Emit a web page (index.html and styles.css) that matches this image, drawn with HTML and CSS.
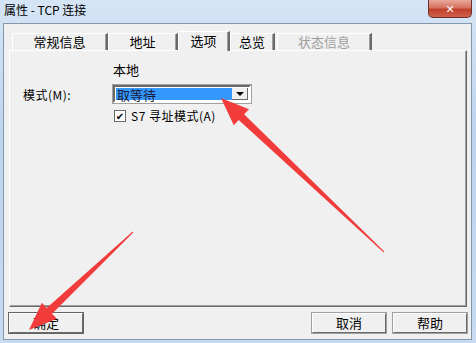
FILE: index.html
```html
<!DOCTYPE html>
<html lang="zh-CN">
<head>
    <meta charset="UTF-8">
    <link rel="stylesheet" href="styles.css">
    <title>属性 - TCP 连接</title>
</head>
<body>
    <div class="window">
        <div class="titlebar">
            <span class="title">属性 - TCP 连接</span>
            <span class="close">✕</span>
        </div>
        <div class="client">
            <!-- 选项卡 -->
            <div class="tabs">
                <div class="tab tab--w1">常规信息</div>
                <div class="tab tab--w2">地址</div>
                <div class="tab tab--active">选项</div>
                <div class="tab tab--w3">总览</div>
                <div class="tab tab--w4 tab--disabled">状态信息</div>
            </div>
            <div class="panel">
                <div class="form">
                    <span></span>
                    <span class="local">本地</span>
                    <label class="label">模式(M):</label>
                    <div class="combo">
                        <span class="combo__value">取等待</span>
                        <span class="combo__btn"><i class="caret"></i></span>
                    </div>
                    <span></span>
                    <label class="check">
                        <span class="check__box">✔</span>
                        <span>S7 寻址模式(A)</span>
                    </label>
                </div>
            </div>
            <div class="buttons">
                <button class="btn btn--default">确定</button>
                <span class="spacer"></span>
                <button class="btn">取消</button>
                <button class="btn">帮助</button>
            </div>
        </div>
    </div>

    <svg class="arrows" width="476" height="343" viewBox="0 0 476 343">
        <polygon points="384.3,251.6 244.1,114.3 249,109.2 221,98 233.8,125.2 238.7,120.1 383.7,252.4"/>
        <polygon points="133.3,232.4 52.1,313.7 56.9,318.8 29,330 41.9,302.8 46.7,307.9 132.7,231.6"/>
    </svg>
</body>
</html>
```

FILE: styles.css
```css
/* 基本设置 */
body {
    margin: 0;
    width: 476px;
    height: 343px;
    overflow: hidden;
    font-family: "Noto Sans CJK SC", "DejaVu Sans", sans-serif;
    font-size: 12px;
    color: #000;
    position: relative;
}

.window {
    width: 476px;
    height: 343px;
    display: flex;
    flex-direction: column;
    background: linear-gradient(180deg, #d5e5f6 0%, #bcd4ee 40%, #c6dbf1 100%);
    box-sizing: border-box;
}

/* 标题栏 */
.titlebar {
    height: 23px;
    display: flex;
    align-items: flex-start;
    justify-content: space-between;
    flex-shrink: 0;
}

.title {
    padding: 2px 0 0 4px;
    font-size: 12px;
    line-height: 16px;
}

.close {
    width: 44px;
    height: 18px;
    margin-right: 4px;
    border: 1px solid #6b2f2a;
    border-top: none;
    border-radius: 0 0 5px 5px;
    background: linear-gradient(180deg, #e9a99b 0%, #d6735f 45%, #c1412c 55%, #d0604a 100%);
    color: #fff;
    font-size: 11px;
    font-weight: bold;
    text-align: center;
    line-height: 17px;
    box-sizing: border-box;
}

/* 客户区 */
.client {
    flex: 1;
    margin: 0 4px 3px 3px;
    border: 1px solid #8396ab;
    background: #f0f0f0;
    display: flex;
    flex-direction: column;
    padding: 7px 4px 6px 5px;
}

.tabs {
    display: flex;
    align-items: flex-end;
    height: 20px;
    padding-left: 3px;
    margin-bottom: -1px;
    position: relative;
    z-index: 1;
}

.tab {
    height: 17px;
    box-sizing: border-box;
    border-top: 1px solid #fff;
    border-left: 1px solid #fff;
    border-right: 2px solid #696969;
    box-shadow: inset -1px 0 0 #a0a0a0;
    text-align: center;
    font-size: 13px;
    line-height: 16px;
    margin-bottom: 1px;
}

.tab--w1 { width: 96px; }
.tab--w2 { width: 70px; }
.tab--w3 { width: 45px; }
.tab--w4 { width: 95px; }

.tab--active {
    width: 52px;
    height: 20px;
    margin-bottom: 0;
    background: #f0f0f0;
    line-height: 17px;
}

.tab--disabled {
    color: #a0a0a0;
    margin-left: 2px;
}

/* 面板 */
.panel {
    height: 257px;
    box-sizing: border-box;
    border-top: 1px solid #fff;
    border-left: 1px solid #fff;
    border-right: 1px solid #696969;
    border-bottom: 1px solid #696969;
    box-shadow: inset -1px -1px 0 #a0a0a0;
    padding: 11px 0 0 13px;
}

.form {
    display: grid;
    grid-template-columns: 90px auto;
    row-gap: 8px;
    align-items: center;
}

.local {
    font-size: 13px;
    line-height: 15px;
}

.label {
    font-size: 12px;
    letter-spacing: 0.5px;
}

.combo {
    width: 138px;
    height: 18px;
    box-sizing: border-box;
    border: 2px solid;
    border-color: #696969 #fff #fff #696969;
    box-shadow: 0 0 0 1px #a0a0a0;
    background: #fff;
    display: flex;
    padding: 1px;
}

.combo__value {
    flex: 1;
    background: #3399ff;
    color: #1b1b3a;
    font-size: 13px;
    line-height: 13px;
    padding-left: 1px;
}

.combo__btn {
    width: 16px;
    display: flex;
    align-items: center;
    justify-content: center;
    background: #f0f0f0;
    border-right: 1px solid #696969;
    border-bottom: 1px solid #696969;
    box-sizing: border-box;
}

.caret {
    width: 0;
    height: 0;
    border-left: 4px solid transparent;
    border-right: 4px solid transparent;
    border-top: 4px solid #000;
}

.check {
    display: flex;
    align-items: center;
    gap: 5px;
    margin-top: -4px;
    padding-left: 1px;
    font-size: 12px;
    letter-spacing: 0.5px;
}

.check__box {
    width: 12px;
    height: 12px;
    box-sizing: border-box;
    border: 1px solid #696969;
    background: #fff;
    font-size: 10px;
    line-height: 10px;
    text-align: center;
    letter-spacing: 0;
}

/* 按钮 */
.buttons {
    display: flex;
    gap: 7px;
    margin-top: 6px;
}

.spacer {
    flex: 1;
}

.btn {
    width: 74px;
    height: 20px;
    font-family: inherit;
    font-size: 13px;
    line-height: 16px;
    padding: 0;
    background: #f0f0f0;
    border: 1px solid;
    border-color: #fff #696969 #696969 #fff;
    box-shadow: 0 0 0 1px #a0a0a0;
    color: #000;
}

.btn--default {
    box-shadow: 0 0 0 1px #646464;
}

/* 红色箭头 */
.arrows {
    position: absolute;
    left: 0;
    top: 0;
    pointer-events: none;
}

.arrows polygon {
    fill: #f23b3b;
}
```
